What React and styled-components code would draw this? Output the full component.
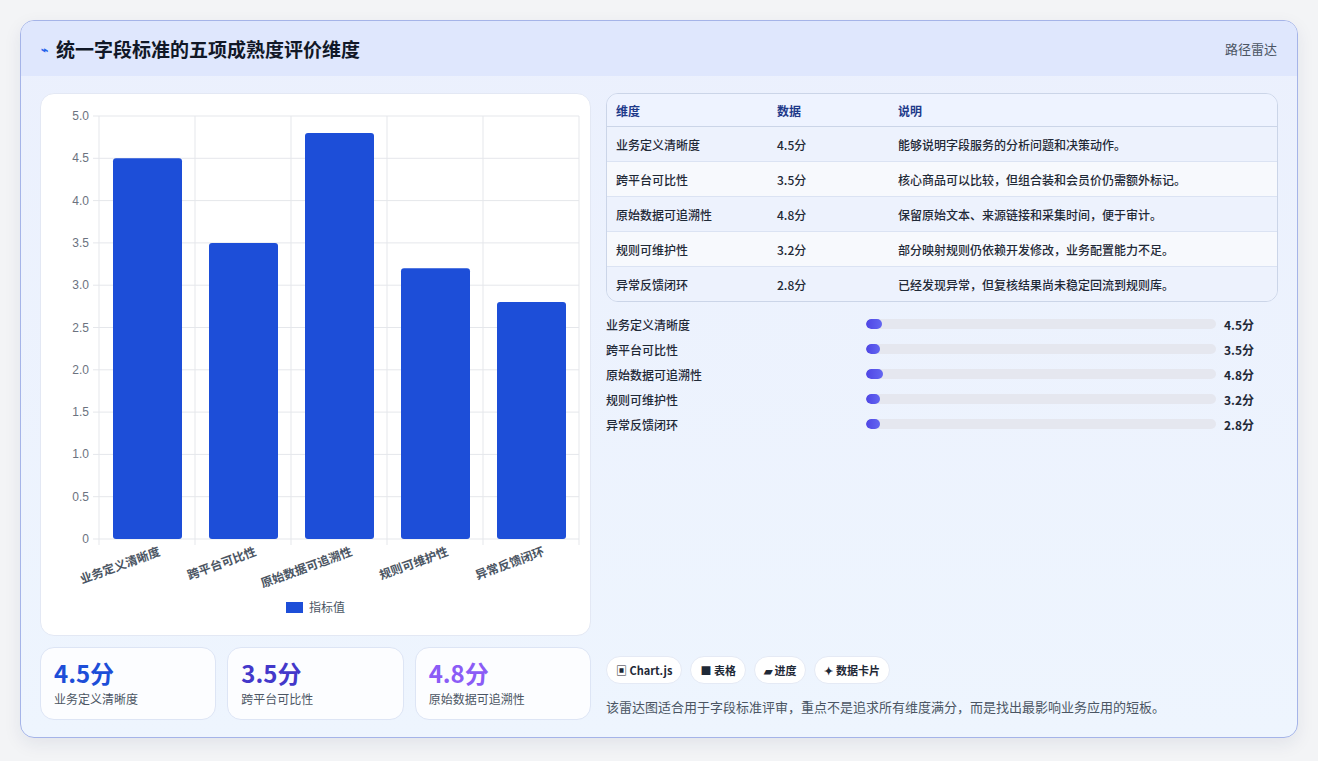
import React from "react";
import styled, { createGlobalStyle } from "styled-components";

const Global = createGlobalStyle`
  html,body{margin:0;background:#f3f4f6;font-family:"Noto Sans CJK SC","Noto Sans",sans-serif;}
`;
const data = [
  { name: "业务定义清晰度", v: 4.5, d: "能够说明字段服务的分析问题和决策动作。" },
  { name: "跨平台可比性", v: 3.5, d: "核心商品可以比较，但组合装和会员价仍需额外标记。" },
  { name: "原始数据可追溯性", v: 4.8, d: "保留原始文本、来源链接和采集时间，便于审计。" },
  { name: "规则可维护性", v: 3.2, d: "部分映射规则仍依赖开发修改，业务配置能力不足。" },
  { name: "异常反馈闭环", v: 2.8, d: "已经发现异常，但复核结果尚未稳定回流到规则库。" },
];
const Page = styled.div`padding:20px 20px 21px 20px;`;
const Card = styled.div`
  border:1px solid #a5b4e8;border-radius:14px;overflow:hidden;height:718px;box-sizing:border-box;
  background:linear-gradient(180deg,#ebf0fd,#eef5fe);box-shadow:0 6px 18px rgba(30,40,90,.08);
  display:flex;flex-direction:column;
`;
const Header = styled.div`
  height:55px;background:#dfe7fd;display:flex;align-items:center;justify-content:space-between;padding:0 20px;flex-shrink:0;
`;
const Title = styled.h1`margin:0;font-size:19px;font-weight:700;color:#111827;display:flex;align-items:center;gap:8px;`;
const Tag = styled.span`font-size:13px;color:#4b5563;`;
const Body = styled.div`flex:1;display:grid;grid-template-columns:551px 1fr;gap:15px;padding:17px 19px 18px 19px;`;
const Left = styled.div`display:flex;flex-direction:column;gap:11px;`;
const ChartCard = styled.div`background:#fff;border:1px solid #e3e8f4;border-radius:14px;height:543px;box-sizing:border-box;`;
const Stats = styled.div`display:grid;grid-template-columns:repeat(3,1fr);gap:11px;`;
const Stat = styled.div`background:rgba(255,255,255,.8);border:1px solid #dde5f5;border-radius:14px;height:73px;box-sizing:border-box;padding:10px 13px;`;
const StatVal = styled.div`font-size:24px;font-weight:700;color:${p=>p.c};line-height:30px;`;
const StatLab = styled.div`font-size:12px;color:#4b5563;margin-top:2px;`;
const Right = styled.div`display:flex;flex-direction:column;`;
const Table = styled.table`width:100%;border-collapse:separate;border-spacing:0;border:1px solid #cbd5e8;border-radius:12px;overflow:hidden;font-size:12px;`;
const Th = styled.th`text-align:left;font-weight:700;color:#1e3a8a;height:32px;padding:0 9px;border-bottom:1px solid #cbd5e8;background:#eef3ff;`;
const Td = styled.td`height:34px;padding:0 9px;color:#1f2937;font-weight:500;border-top:${p=>p.first?"none":"1px solid #dbe3f3"};background:${p=>p.alt?"#f7f9fd":"#edf2fd"};`;
const Bars = styled.div`display:flex;flex-direction:column;gap:7px;margin-top:13px;`;
const BarRow = styled.div`display:grid;grid-template-columns:252px 350px 1fr;align-items:center;column-gap:8px;font-size:12px;color:#1f2937;font-weight:500;height:18px;`;
const Track = styled.div`height:10px;background:#e5e7ef;border-radius:5px;overflow:hidden;`;
const Fill = styled.div`height:100%;border-radius:5px;background:linear-gradient(90deg,#4f46e5,#6366f1);`;
const Val = styled.span`font-weight:700;`;
const Footer = styled.div`margin-top:auto;`;
const Chips = styled.div`display:flex;gap:8px;`;
const Chip = styled.span`background:#fff;border:1px solid #e5eaf5;border-radius:14px;padding:5px 9px;font-size:11px;font-weight:600;color:#1f2937;`;
const Note = styled.p`margin:13px 0 4px;font-size:13px;color:#4b5563;`;

const Chart = () => {
  const L = 58, R = 538, T = 22, B = 445, w = (R - L) / 5;
  const y = v => B - (v / 5) * (B - T);
  const ticks = [0,0.5,1,1.5,2,2.5,3,3.5,4,4.5,5];
  return (
    <svg width="549" height="541" style={{ display: "block" }} fontFamily='"Noto Sans CJK SC","Liberation Sans",sans-serif'>
      {ticks.map(t => (
        <g key={t}>
          <line x1={L - 6} x2={R} y1={y(t)} y2={y(t)} stroke="#e5e7eb" />
          <text x={L - 10} y={y(t) + 4} fontSize="12" fill="#6b7280" textAnchor="end" fontFamily="Liberation Sans">{t === 0 ? "0" : t.toFixed(1)}</text>
        </g>
      ))}
      {[0,1,2,3,4,5].map(i => <line key={i} x1={L + i * w} x2={L + i * w} y1={T} y2={B + 6} stroke="#e5e7eb" />)}
      {data.map((d, i) => (
        <g key={d.name}>
          <rect x={L + i * w + 14} y={y(d.v)} width={69} height={B - y(d.v)} rx="3" fill="#1d4ed8" />
          <text x={L + i * w + w / 2 + 14} y={B + 16} fontSize="12" fontWeight="600" fill="#4b5563" textAnchor="end" transform={`rotate(-20 ${L + i * w + w / 2 + 14} ${B + 16})`}>{d.name}</text>
        </g>
      ))}
      <rect x="245" y="508" width="17" height="11" fill="#1d4ed8" />
      <text x="268" y="518" fontSize="12" fill="#4b5563">指标值</text>
    </svg>
  );
};

export default function App() {
  return (
    <Page>
      <Global />
      <Card>
        <Header>
          <Title><span style={{ color: "#2563eb", fontSize: 12 }}>⌁</span>统一字段标准的五项成熟度评价维度</Title>
          <Tag>路径雷达</Tag>
        </Header>
        <Body>
          <Left>
            <ChartCard><Chart /></ChartCard>
            <Stats>
              <Stat><StatVal c="#1d4ed8">4.5分</StatVal><StatLab>业务定义清晰度</StatLab></Stat>
              <Stat><StatVal c="#4338ca">3.5分</StatVal><StatLab>跨平台可比性</StatLab></Stat>
              <Stat><StatVal c="#8b5cf6">4.8分</StatVal><StatLab>原始数据可追溯性</StatLab></Stat>
            </Stats>
          </Left>
          <Right>
            <Table>
              <thead><tr><Th style={{ width: 143 }}>维度</Th><Th style={{ width: 103 }}>数据</Th><Th>说明</Th></tr></thead>
              <tbody>
                {data.map((d, i) => (
                  <tr key={d.name}>
                    <Td first={i === 0} alt={i % 2 === 1}>{d.name}</Td>
                    <Td first={i === 0} alt={i % 2 === 1}>{d.v}分</Td>
                    <Td first={i === 0} alt={i % 2 === 1}>{d.d}</Td>
                  </tr>
                ))}
              </tbody>
            </Table>
            <Bars>
              {data.map(d => (
                <BarRow key={d.name}>
                  <span>{d.name}</span>
                  <Track><Fill style={{ width: `${d.v}%`, minWidth: 14 }} /></Track>
                  <Val>{d.v}分</Val>
                </BarRow>
              ))}
            </Bars>
            <Footer>
              <Chips>
                <Chip>▣ Chart.js</Chip><Chip>■ 表格</Chip><Chip>▰ 进度</Chip><Chip>✦ 数据卡片</Chip>
              </Chips>
              <Note>该雷达图适合用于字段标准评审，重点不是追求所有维度满分，而是找出最影响业务应用的短板。</Note>
            </Footer>
          </Right>
        </Body>
      </Card>
    </Page>
  );
}
